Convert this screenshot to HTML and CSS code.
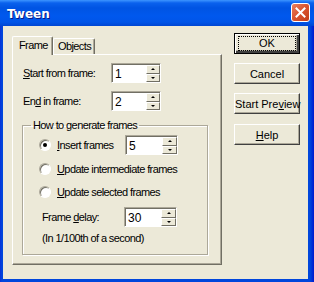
FILE: index.html
```html
<!DOCTYPE html>
<html lang="en">
<head>
    <meta charset="UTF-8">
    <meta name="viewport" content="width=device-width, initial-scale=1.0">
    <title>Tween</title>
    <link rel="stylesheet" href="styles.css">
</head>
<body>

    <div class="window">
        <!-- Title bar -->
        <div class="titlebar">
            <span class="title">Tween</span>
            <button class="close-btn" aria-label="Close">
                <svg width="11" height="11" viewBox="0 0 11 11">
                    <path d="M1.5 1.5 L9.5 9.5 M9.5 1.5 L1.5 9.5" stroke="#fff" stroke-width="2" stroke-linecap="square"/>
                </svg>
            </button>
        </div>

        <div class="client">
            <!-- Tab control -->
            <div class="tab-control">
                <div class="tab-strip">
                    <div class="tab active">Frame</div>
                    <div class="tab">Objects</div>
                </div>
                <div class="tab-panel">
                    <div class="field-row">
                        <label class="field-label" for="startFrame"><u>S</u>tart from frame:</label>
                        <div class="spin">
                            <input type="text" id="startFrame" value="1">
                            <div class="spin-btns"><span class="spin-up"></span><span class="spin-down"></span></div>
                        </div>
                    </div>
                    <div class="field-row">
                        <label class="field-label" for="endFrame">En<u>d</u> in frame:</label>
                        <div class="spin">
                            <input type="text" id="endFrame" value="2">
                            <div class="spin-btns"><span class="spin-up"></span><span class="spin-down"></span></div>
                        </div>
                    </div>

                    <fieldset class="group">
                        <legend>How to generate frames</legend>
                        <div class="radio-row row-insert">
                            <input type="radio" name="mode" id="modeInsert" checked>
                            <label class="radio-label short" for="modeInsert"><u>I</u>nsert frames</label>
                            <div class="spin wide">
                                <input type="text" value="5">
                                <div class="spin-btns"><span class="spin-up"></span><span class="spin-down"></span></div>
                            </div>
                        </div>
                        <div class="radio-row row-mid">
                            <input type="radio" name="mode" id="modeIntermediate">
                            <label class="radio-label" for="modeIntermediate"><u>U</u>pdate intermediate frames</label>
                        </div>
                        <div class="radio-row row-sel">
                            <input type="radio" name="mode" id="modeSelected">
                            <label class="radio-label" for="modeSelected"><u>U</u>pdate selected frames</label>
                        </div>
                        <div class="delay-row">
                            <label class="delay-label" for="frameDelay">Frame <u>d</u>elay:</label>
                            <div class="spin wide">
                                <input type="text" id="frameDelay" value="30">
                                <div class="spin-btns"><span class="spin-up"></span><span class="spin-down"></span></div>
                            </div>
                        </div>
                        <div class="note">(In 1/100th of a second)</div>
                    </fieldset>
                </div>
            </div>

            <!-- Dialog buttons -->
            <div class="buttons">
                <button class="button default"><span class="focus">OK</span></button>
                <button class="button">Cancel</button>
                <button class="button">Start Pre<u>v</u>iew</button>
                <button class="button help"><u>H</u>elp</button>
            </div>
        </div>
    </div>

</body>
</html>
```

FILE: styles.css
```css
body {
    margin: 0;
    font-family: "Liberation Sans", Arial, sans-serif;
    font-size: 11px;
    letter-spacing: -0.6px;
    color: #000;
}

u {
    text-decoration: underline;
    text-underline-offset: 1px;
}

.window {
    width: 314px;
    height: 282px;
    box-sizing: border-box;
    padding: 0 6px 3px 3px;
    background: linear-gradient(to right, #0831d9, #0046dc 2px, #0046dc 310px, #0019cf);
    display: flex;
    flex-direction: column;
}

/* Title bar */
.titlebar {
    height: 26px;
    margin: 0 -6px 0 -3px;
    padding: 0 4px 0 7px;
    background: linear-gradient(to bottom, #3d95ff 0, #0a61ed 3px, #0054e3 8px, #0058ee 16px, #0055e8 22px, #0046d2 26px);
    display: flex;
    align-items: center;
    justify-content: space-between;
    box-sizing: border-box;
}

.title {
    color: #fff;
    font-family: "DejaVu Sans", sans-serif;
    font-weight: bold;
    font-size: 12px;
    letter-spacing: 0;
    text-shadow: 1px 1px #0a1883;
    margin-top: 1px;
}

.close-btn {
    width: 19px;
    height: 19px;
    margin-top: -1px;
    padding: 0;
    border: 1px solid #fff;
    border-radius: 3px;
    background: linear-gradient(135deg, #e9805f, #d9532e 50%, #c23c18);
    display: flex;
    align-items: center;
    justify-content: center;
}

.client {
    flex: 1;
    background: #ece9d8;
    display: flex;
    padding: 7px 0 0 9px;
}

/* Tabs */
.tab-control {
    width: 210px;
    margin-top: 3px;
}

.tab-strip {
    height: 18px;
    display: flex;
    align-items: flex-end;
}

.tab {
    position: relative;
    width: 42px;
    height: 16px;
    box-sizing: border-box;
    padding: 0 0 0 4px;
    border-top: 1px solid #fff;
    border-left: 1px solid #fff;
    border-right: 1px solid #716f64;
    border-radius: 2px 2px 0 0;
    box-shadow: inset -1px 0 #aca899;
    line-height: 15px;
    background: #ece9d8;
}

.tab.active {
    width: 41px;
    height: 19px;
    margin-bottom: -1px;
    padding-left: 6px;
    z-index: 1;
    line-height: 17px;
}

.tab-panel {
    height: 211px;
    box-sizing: border-box;
    border: 1px solid;
    border-color: #fff #716f64 #716f64 #fff;
    box-shadow: inset -1px -1px #aca899;
    padding-top: 8px;
}

.field-row {
    height: 20px;
    display: flex;
    align-items: center;
    margin-bottom: 8px;
    padding-left: 10px;
}

.field-label {
    width: 88px;
}

/* Spin boxes */
.spin {
    width: 50px;
    height: 20px;
    box-sizing: border-box;
    display: flex;
    border: 1px solid;
    border-color: #aca899 #fff #fff #aca899;
    background: #fff;
}

.spin.wide {
    width: 53px;
}

.spin input {
    flex: 1;
    min-width: 0;
    border: none;
    border-top: 1px solid #716f64;
    border-left: 1px solid #716f64;
    padding: 0 0 0 2px;
    margin: 0;
    font: inherit;
    font-size: 12px;
    letter-spacing: 0;
    background: #fff;
    outline: none;
}

.spin-btns {
    width: 14px;
    display: flex;
    flex-direction: column;
    border-top: 1px solid #716f64;
    background: #fff;
}

.spin.wide .spin-btns {
    width: 15px;
}

.spin-up,
.spin-down {
    flex: 1;
    display: flex;
    align-items: center;
    justify-content: center;
    background: #ece9d8;
    border: 1px solid;
    border-color: #fff #716f64 #716f64 #fff;
}

.spin-up::after {
    content: "";
    border-left: 2px solid transparent;
    border-right: 2px solid transparent;
    border-bottom: 2px solid #000;
}

.spin-down::after {
    content: "";
    border-left: 2px solid transparent;
    border-right: 2px solid transparent;
    border-top: 2px solid #000;
}

/* Group box */
.group {
    width: 186px;
    box-sizing: border-box;
    margin: 5px 0 0 9px;
    padding: 0 0 8px 0;
    border: 1px solid #aca899;
    box-shadow: inset 1px 1px #fff, 1px 1px #fff;
}

.group legend {
    margin-left: 8px;
    padding: 0 2px;
    line-height: 13px;
}

.radio-row {
    display: flex;
    align-items: center;
    padding-left: 16px;
}

.row-insert {
    height: 26px;
}

.row-mid {
    height: 22px;
}

.row-sel {
    height: 24px;
}

.radio-row input[type="radio"] {
    appearance: none;
    width: 12px;
    height: 12px;
    margin: 0 6px 0 0;
    border-radius: 50%;
    border: 1px solid;
    border-color: #aca899 #fff #fff #aca899;
    box-shadow: inset 1px 1px #716f64;
    background: #fff;
    display: flex;
    align-items: center;
    justify-content: center;
}

.radio-row input[type="radio"]:checked::after {
    content: "";
    width: 4px;
    height: 4px;
    border-radius: 50%;
    background: #000;
}

.radio-label.short {
    width: 68px;
}

.delay-row {
    height: 26px;
    display: flex;
    align-items: center;
    padding-left: 19px;
}

.delay-label {
    width: 82px;
}

.note {
    height: 16px;
    line-height: 16px;
    padding-left: 19px;
}

/* Dialog buttons */
.buttons {
    margin-left: 12px;
    width: 66px;
    display: flex;
    flex-direction: column;
}

.button {
    height: 21px;
    margin-bottom: 8px;
    padding: 0;
    font: inherit;
    white-space: nowrap;
    color: #000;
    background: #ece9d8;
    border: 1px solid;
    border-color: #fff #404040 #404040 #fff;
    box-shadow: inset -1px -1px #aca899;
}

.button + .button {
    margin-top: 1px;
}

.button.help {
    margin-top: 2px;
}

.button.default {
    border: 1px solid #000;
    box-shadow: inset 1px 1px #fff, inset -2px -2px #404040, inset -3px -3px #aca899;
    display: flex;
    align-items: center;
    justify-content: center;
}

.focus {
    width: 56px;
    height: 13px;
    line-height: 13px;
    border: 1px dotted #000;
    text-align: center;
}
```
